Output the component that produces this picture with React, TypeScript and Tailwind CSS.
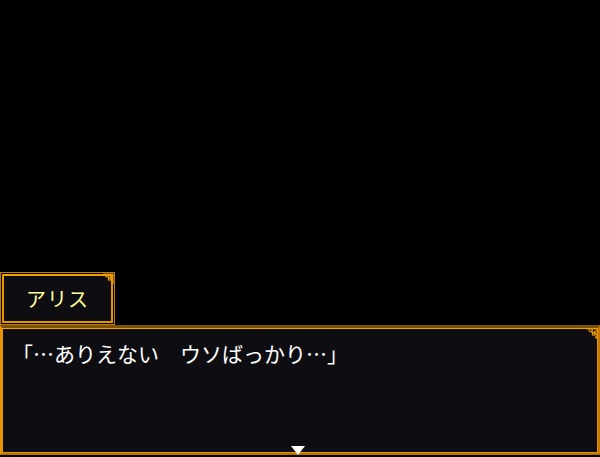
import React from "react";

const Ornament: React.FC = () => (
  <svg
    width="12"
    height="12"
    viewBox="0 0 12 12"
    className="absolute right-0 top-0"
    fill="none"
    stroke="#e69a10"
    strokeWidth="1.2"
  >
    <path d="M1 1 H11 V11" />
    <path d="M3 1.5 C3 4 5 4.5 6 3.5 C7 2.5 6 1.5 5 2.5" />
    <rect x="6.5" y="4.5" width="2.5" height="2.5" />
    <path d="M10.5 3 C8 3 7.5 5 8.5 6 C9.5 7 10.5 6 9.5 5" />
    <path d="M11 8 L9 10" />
  </svg>
);

const App: React.FC = () => {
  return (
    <div
      className="w-[600px] h-[457px] bg-black flex flex-col justify-end overflow-hidden"
      style={{ fontFamily: '"Noto Sans CJK JP", "Noto Sans", sans-serif' }}
    >
      {/* name plate */}
      <div className="relative w-[115px] h-[53px] border border-[#c77a00] p-px bg-black">
        <div className="h-full border-2 border-[#e69500] border-t-[#f0a000] bg-[#0e0e12] flex items-center pl-[22px]">
          <span className="text-[20px] leading-none text-[#ffff9a] tracking-[1px]">
            アリス
          </span>
        </div>
        <Ornament />
      </div>

      {/* message window */}
      <div className="relative h-[130px] mb-[2px] border-t-[3px] border-t-[#7a5200] border-l-2 border-l-[#e69500] border-r-2 border-r-[#c77a00] border-b-2 border-b-[#b87000] bg-black">
        <div className="h-full border border-[#e69500] border-t-[#f0a000] bg-[#0e0e12] pl-[9px] pt-[10px] flex flex-col">
          <p className="text-[21px] leading-[28px] text-white whitespace-pre">
            「…ありえない　ウソばっかり…」
          </p>
          <div className="mt-auto mb-[-3px] flex justify-center pr-[13px]">
            <div className="w-0 h-0 border-l-[7px] border-r-[7px] border-t-[9px] border-l-transparent border-r-transparent border-t-white" />
          </div>
        </div>
        <Ornament />
      </div>
    </div>
  );
};

export default App;
